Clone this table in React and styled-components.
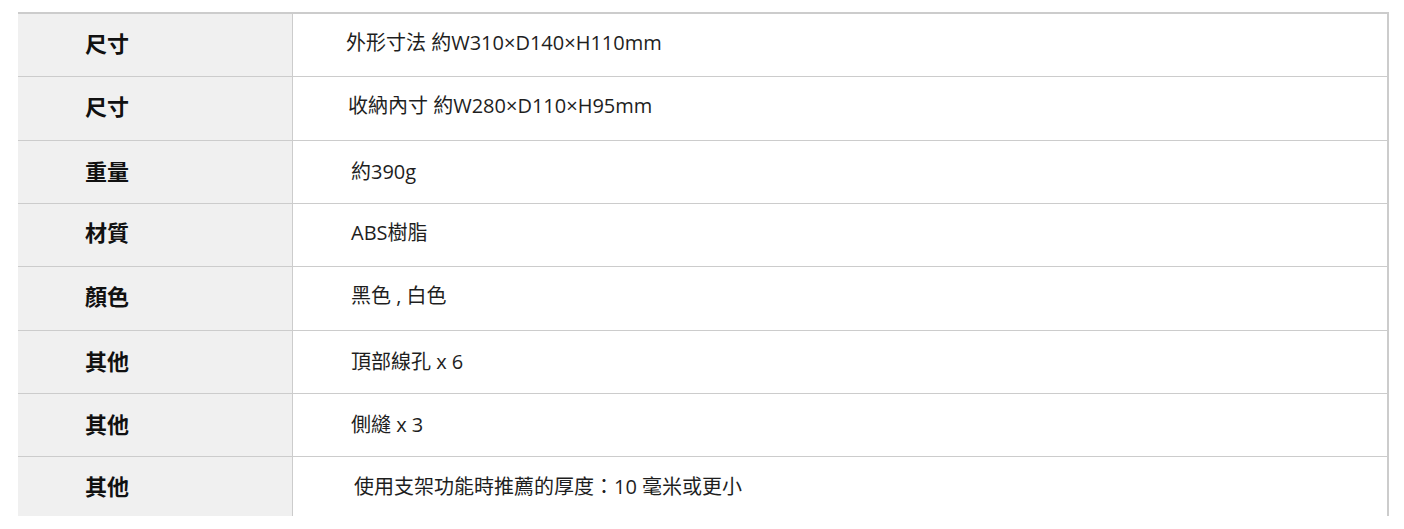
import React from "react";
import styled, { createGlobalStyle } from "styled-components";

const Global = createGlobalStyle`
  html, body { margin: 0; padding: 0; background: #ffffff; }
  body { font-family: "Open Sans", "Noto Sans CJK TC", sans-serif; }
`;

const Page = styled.div`
  padding: 12px 15px 0 18px;
  height: 529px;
  box-sizing: border-box;
`;

const Table = styled.div`
  display: grid;
  grid-template-columns: 275px 1fr;
  border-top: 2px solid #cccccc;
  border-right: 2px solid #cccccc;
`;

const Row = styled.div`
  display: contents;
  &:last-child > * {
    height: 59px;
    border-bottom: none;
  }
`;

const Label = styled.div`
  box-sizing: border-box;
  height: 63.33px;
  background: #f0f0f0;
  border-bottom: 1px solid #cccccc;
  border-right: 1px solid #cccccc;
  display: flex;
  align-items: center;
  padding-left: 67px;
  padding-bottom: ${(p) => p.$lift}px;
  font-family: "Open Sans", "Noto Sans CJK TC", sans-serif;
  font-weight: 700;
  font-size: 22px;
  color: #111111;
`;

const Value = styled.div`
  box-sizing: border-box;
  height: 63.33px;
  background: #ffffff;
  border-bottom: 1px solid #cccccc;
  display: flex;
  align-items: center;
  padding-left: ${(p) => p.$indent}px;
  padding-bottom: ${(p) => p.$lift}px;
  font-family: "Open Sans", "Noto Sans CJK TC", sans-serif;
  font-size: 20px;
  color: #1e1e1e;
  white-space: pre;
`;

const rows = [
  ["尺寸", "外形寸法 約W310×D140×H110mm", 53, 7],
  ["尺寸", "收納內寸 約W280×D110×H95mm", 55, 7],
  ["重量", "約390g", 58, 3],
  ["材質", "ABS樹脂", 58, 8],
  ["顏色", "黑色 , 白色", 58, 7],
  ["其他", "頂部線孔 x 6", 58, 3],
  ["其他", "側縫 x 3", 58, 4],
  ["其他", "使用支架功能時推薦的厚度：10 毫米或更小", 61, 3],
];

export default function App() {
  return (
    <>
      <Global />
      <Page>
        <Table>
          {rows.map(([k, v, indent, lift], i) => (
            <Row key={i}>
              <Label $lift={lift}>{k}</Label>
              <Value $indent={indent} $lift={lift}>{v}</Value>
            </Row>
          ))}
        </Table>
      </Page>
    </>
  );
}
